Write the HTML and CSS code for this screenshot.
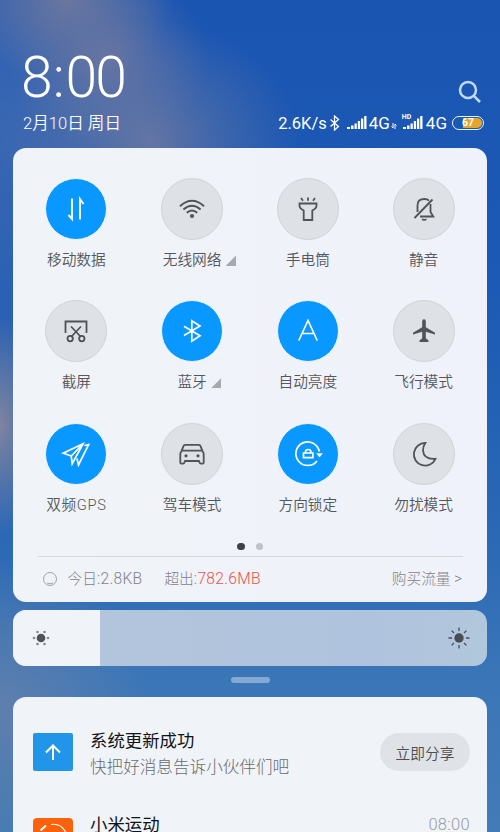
FILE: index.html
```html
<!DOCTYPE html>
<html lang="zh-CN">
<head>
<meta charset="utf-8">
<title>控制中心</title>
<link rel="stylesheet" href="styles.css">
</head>
<body>
<div class="screen">
  <header class="header">
    <div class="clock"><span>8</span><span class="colon">:</span><span>00</span></div>
    <svg class="search" viewBox="0 0 24 24"><circle cx="10" cy="10" r="8"/><path d="M15.8 15.8 22 22"/></svg>
    <div class="date">2月10日 周日</div>
    <div class="status">
      <span class="speed">2.6K/s</span>
      <svg class="s-bt" viewBox="0 0 10 16"><path d="M1 4.5 9 11.5 5 15V1l4 3.5-8 7"/></svg>
      <svg class="s-signal" viewBox="0 0 20 14"><path d="M0 11h3v2H0zM4 9.5h2.5V13H4zM7.500 7.500h2.300V13H7.500zM10.800 5h2.300v8h-2.300zM14 2.500h2.300V13H14zM17.200 0h2.300v13h-2.300z"/></svg>
      <span class="net">4G</span>
      <svg class="s-data" viewBox="0 0 6 6"><path d="M2 0v5L.5 3.500M4 6V1l1.500 1.500"/></svg>
      <span class="hd-signal"><svg class="s-signal" viewBox="0 0 20 14"><path d="M0 11h3v2H0zM4 9.500h2.500V13H4zM7.500 7.500h2.300V13H7.500zM10.800 5h2.300v8h-2.300zM14 2.500h2.300V13H14zM17.200 0h2.300v13h-2.300z"/></svg><small>HD</small></span>
      <span class="net">4G</span>
      <span class="battery"><b>67</b></span>
    </div>
  </header>

  <main class="panel">
    <div class="grid">
      <div class="tile on"><i><svg viewBox="0 0 30 30"><path stroke-width="1.900" d="M11 4.500V25L7.500 21M19 25.500V5l3.500 5"/></svg></i><p>移动数据</p></div>
      <div class="tile"><i><svg viewBox="0 0 30 30"><path stroke-width="1.900" d="M3 12.200Q15 1.500 27 12.200M6.400 15.500q8.600-7.400 17.200 0M9.700 18.800q5.300-4.500 10.600 0"/><circle class="fill" cx="15" cy="22" r="2.100"/></svg></i><p>无线网络<em></em></p></div>
      <div class="tile"><i><svg viewBox="0 0 30 30"><path d="M6.500 9.500h17v2.300q0 2.700-4.200 4.700v9.500h-8.600v-9.500q-4.200-2-4.200-4.700zM15 3.500v3.200M8 4l2 2.700M22 4l-2 2.700"/></svg></i><p>手电筒</p></div>
      <div class="tile"><i><svg viewBox="0 0 30 30"><path d="M8.500 18v-6.500q0-6.500 7-6.500 3 0 4.500 1.600M21.500 10v8l2.800 4.500H11M5.500 24 23.500 5.500M13 25.300q2 1.200 4.500 0"/></svg></i><p>静音</p></div>

      <div class="tile"><i><svg viewBox="0 0 30 30"><path d="M4.500 17V5.500h21V17M10 10.500 20 21M20 10.500 10 21"/><circle cx="9.200" cy="22.600" r="2.700"/><circle cx="20.800" cy="22.600" r="2.700"/></svg></i><p>截屏</p></div>
      <div class="tile on"><i><svg viewBox="0 0 30 30"><path stroke-width="1.700" d="m7 10.300 16 9.500-8.200 5.400V4.800L23 10 7 19.500"/></svg></i><p>蓝牙<em></em></p></div>
      <div class="tile on"><i><svg viewBox="0 0 30 30"><path stroke-width="1.700" d="M5.800 24.500 15 4.500l9.200 20M9.300 17.500h11.400"/></svg></i><p>自动亮度</p></div>
      <div class="tile"><i><svg viewBox="0 0 30 30"><path class="fill" d="M15 3.200q1.800 0 1.800 2v6.100l9.200 5.500v1.600l-9.200-2.600v6.500l2.700 2.300v1.300h-9v-1.300l2.700-2.300v-6.500L4 18.400v-1.600l9.200-5.500V5.200q0-2 1.800-2z"/></svg></i><p>飞行模式</p></div>

      <div class="tile on"><i><svg viewBox="0 0 30 30"><path stroke-width="1.700" d="M22 4.800 2.200 14.200l8 2.800 1 7.700zM22 4.800 10.300 17M23.300 6.500l4.300-.9L17.500 26l-1.500-6.500"/></svg></i><p>双频GPS</p></div>
      <div class="tile"><i><svg viewBox="0 0 30 30"><path d="M8 5.800h14q1 0 1.400 1l2.100 5.300q1.200 1.400 1.200 3.200v8.300q0 1-1 1h-1.800q-1 0-1.300-1l-.6-1.600H8l-.6 1.600q-.3 1-1.300 1H4.300q-1 0-1-1v-8.300q0-1.800 1.200-3.200l2.100-5.300q.4-1 1.400-1zM5 11.700h20"/><circle class="fill" cx="9" cy="16.800" r="1.600"/><circle class="fill" cx="21" cy="16.800" r="1.600"/></svg></i><p>驾车模式</p></div>
      <div class="tile on"><i><svg viewBox="0 0 30 30"><path stroke-width="1.700" d="M24 21.900A11.800 11.800 0 1 1 26.300 12.500M10.500 14h9.400v4.700h-9.400zM12.500 14v-1q0-2.500 2.700-2.500t2.700 2.500v1"/><path class="fill" d="M23.200 14.300h6.600l-3.300 4.200z"/></svg></i><p>方向锁定</p></div>
      <div class="tile"><i><svg viewBox="0 0 30 30"><path d="M16.300 4A11.300 11.300 0 1 0 26.500 19.800Q14.800 20.800 14 11.500 13.900 7.400 16.300 4z"/></svg></i><p>勿扰模式</p></div>
    </div>
    <div class="dots"><span></span><span></span></div>
    <div class="usage">
      <svg viewBox="0 0 16 16"><circle cx="8" cy="8" r="6.500"/><path d="M5 12q3 1.500 6 0"/></svg>
      <span class="today">今日<span class="num">:2.8KB</span></span>
      <span>超出<span class="num">:<b>782.6MB</b></span></span>
      <span class="buy">购买流量 <span class="num">&gt;</span></span>
    </div>
  </main>

  <div class="brightness">
    <div class="level"><svg viewBox="0 0 20 20"><circle cx="10" cy="10" r="4.300"/><g class="rays"><circle cx="3" cy="10" r="1.300"/><circle cx="17" cy="10" r="1.300"/><circle cx="6.500" cy="4" r="1.300"/><circle cx="13.500" cy="4" r="1.300"/><circle cx="6.500" cy="16" r="1.300"/><circle cx="13.500" cy="16" r="1.300"/></g></svg></div>
    <svg class="bright" viewBox="0 0 22 22"><circle cx="11" cy="11" r="4.700"/><path d="M11 .5V4M11 18v3.500M.5 11H4M18 11h3.500M3.600 3.600 6 6M16 16l2.400 2.400M3.600 18.400 6 16M16 6l2.400-2.400"/></svg>
  </div>
  <div class="handle"></div>

  <section class="notices">
    <article class="notice">
      <svg class="app" viewBox="0 0 40 38"><rect width="40" height="38" rx="2" fill="#2196e8"/><path d="M20 27V13M13 19.500l7-7 7 7"/></svg>
      <div class="copy"><h2>系统更新成功</h2><p>快把好消息告诉小伙伴们吧</p></div>
      <button>立即分享</button>
    </article>
    <article class="notice second">
      <svg class="app" viewBox="0 0 40 38"><rect width="40" height="38" rx="4" fill="#fb620b"/><path stroke-width="1.200" d="M18 6.500q9-1.500 14 6.500a13 13 0 0 1-24 9"/><path d="m7.500 12.500 5.500-5"/></svg>
      <h2>小米运动</h2>
      <time>08:00</time>
    </article>
  </section>
</div>
</body>
</html>
```

FILE: styles.css
```css
* { box-sizing: border-box; }
body, h2, p { margin: 0; }
body {
  font-family: Roboto, "Noto Sans CJK SC", sans-serif;
  font-weight: 300;
}
svg { fill: none; stroke: currentColor; flex: none; display: block; }
.screen {
  width: 500px;
  height: 832px;
  overflow: hidden;
  padding: 0 13px;
  background:
    radial-gradient(ellipse 150px 120px at 150px 140px, rgba(116,124,160,.8) 0, rgba(116,124,160,.4) 45%, rgba(116,124,160,0) 100%),
    radial-gradient(ellipse 110px 80px at 65px 0, rgba(124,125,154,.75) 0, rgba(124,125,154,.4) 45%, rgba(124,125,154,0) 100%),
    radial-gradient(ellipse 100px 90px at 108px 60px, rgba(116,122,158,.75) 0, rgba(116,122,158,.35) 50%, rgba(116,122,158,0) 100%),
    radial-gradient(ellipse 45px 110px at 0 425px, #80849f 0, rgba(128,132,159,0) 100%),
    radial-gradient(ellipse 150px 150px at 0 710px, rgba(98,128,172,.9) 0, rgba(98,128,172,0) 100%),
    radial-gradient(ellipse 180px 320px at 0 130px, rgba(70,110,178,.7) 0, rgba(70,110,178,0) 100%),
    linear-gradient(#1a55b2, #1c5ab5 35%, #2b69b5 65%, #3b76b8 82%, #437bb6);
}
.header {
  height: 148px;
  padding: 50px 3px 0 10px;
  display: grid;
  grid-template-columns: 110px 1fr;
  grid-template-rows: 60px 25px;
  color: #fff;
}
.clock {
  font-size: 57px;
  line-height: 55px;
  font-weight: 300;
  letter-spacing: -2px;
  white-space: nowrap;
  margin-left: -2px;
}
.colon { margin: 0 3px 0 2px; }
.search {
  width: 24px;
  height: 24px;
  margin: 30px 2px 0 0;
  justify-self: end;
  color: #c1dbf9;
  stroke-width: 2.500;
}
.date { font-size: 16.600px; line-height: 27px; white-space: nowrap; font-weight: 350; }
.status { display: flex; align-items: center; justify-content: flex-end; height: 26px; font-size: 17px; font-weight: 400; white-space: nowrap; }
.speed { margin-right: 2px; font-size: 16.500px; }
.s-bt { width: 11px; height: 16px; margin-right: 7px; stroke-width: 1.300; }
.s-signal { width: 20px; height: 14px; fill: currentColor; stroke: none; }
.net { margin-left: 2px; }
.s-data { width: 6px; height: 6px; margin: 5px 6px 0 1px; }
.hd-signal { position: relative; }
.hd-signal small { position: absolute; left: -1px; top: -3px; font-size: 7px; line-height: 8px; font-weight: 700; }
.hd-signal + .net { margin-left: 3px; }
.battery {
  width: 32px;
  height: 14px;
  margin-left: 5px;
  border: 1.500px solid #eef6ff;
  border-radius: 8px;
  padding: 1px;
  display: flex;
}
.battery b {
  flex: 1;
  border-radius: 5px;
  text-align: center;
  font-size: 10.500px;
  line-height: 10px;
  background: linear-gradient(90deg, transparent 32%, #e6a52d 32%);
}
.panel {
  height: 454px;
  border-radius: 13px;
  padding: 30px 5.500px 0;
  background: linear-gradient(90deg, #f0f4f8, #eff2fa);
  color: #54575b;
}
.grid { display: grid; grid-template-columns: repeat(4, 1fr); grid-auto-rows: 122.400px; }
.tile { display: flex; flex-direction: column; align-items: center; }
.tile i {
  width: 62px;
  height: 62px;
  border-radius: 50%;
  border: 1px solid #d0d4d9;
  background: #dee1e5;
  display: grid;
  place-items: center;
  color: #505358;
}
.tile.on i { background: #0898ff; border-color: #f0f4f8; color: #fff; }
.tile svg { width: 30px; height: 30px; stroke-width: 1.800; }
.tile .fill { fill: currentColor; stroke: none; }
.tile p { position: relative; margin-top: 10px; font-size: 14.700px; line-height: 20px; font-weight: 350; white-space: nowrap; }
.tile:nth-child(9) p { letter-spacing: .6px; }
.tile em {
  position: absolute;
  left: calc(100% + 4px);
  bottom: 4px;
  width: 10.500px;
  height: 10.500px;
  background: #a6a9ad;
  clip-path: polygon(100% 0, 100% 100%, 0 100%);
}
.dots { display: flex; justify-content: center; gap: 11px; margin-top: -2.500px; height: 10px; }
.dots span { width: 7.500px; height: 7.500px; border-radius: 50%; background: #3e4145; }
.dots span + span { background: #bfc2c6; }
.usage {
  margin: 3px 19px 0;
  border-top: 1px solid #d5d9dd;
  height: 46px;
  padding-left: 4px;
  display: flex;
  align-items: center;
  font-size: 14.700px;
  line-height: 20px;
  color: #7f8286;
}
.usage svg { width: 16px; height: 16px; margin-right: 10px; stroke-width: .7; }
.num { font-size: 15.600px; letter-spacing: .3px; }
.today { margin-right: 22px; }
.usage b { font-weight: 350; color: #ec5148; }
.buy { margin-left: auto; }
.brightness {
  margin-top: 8px;
  height: 56px;
  border-radius: 13px;
  overflow: hidden;
  background: linear-gradient(90deg, #b4c6db, #b0c3de 75%, #b1c7db);
  display: flex;
  align-items: center;
  color: #484d55;
}
.level { width: 87px; height: 56px; background: #f0f4f8; display: flex; align-items: center; padding-left: 18px; }
.level svg { width: 20px; height: 20px; fill: #505256; stroke: none; }
.rays { fill: #85888c; }
.bright { width: 22px; height: 22px; margin: 0 17px 0 auto; stroke-width: 1.300; }
.bright circle { fill: currentColor; stroke: none; }
.handle { width: 39px; height: 6px; margin: 11px auto 14px; border-radius: 3px; background: #84a9d3; }
.notices { height: 160px; border-radius: 13px; background: #f0f4f9; padding: 36px 17px 0 20px; }
.notice { display: flex; align-items: center; height: 38px; }
.app { width: 40px; height: 38px; margin-right: 17px; stroke: #fff; stroke-width: 2; }
.app rect { stroke: none; }
.copy { padding-top: 4px; }
h2 { font-size: 17.400px; line-height: 26px; font-weight: 400; color: #121315; white-space: nowrap; }
.copy p { font-size: 16.600px; line-height: 27px; color: #686b6f; white-space: nowrap; }
button {
  width: 90px;
  height: 38px;
  margin-left: auto;
  padding: 0;
  border: 0;
  border-radius: 19px;
  background: #dfe2e6;
  color: #4b4e52;
  font: 350 14.700px Roboto, "Noto Sans CJK SC", sans-serif;
}
.second { margin-top: 47px; align-items: flex-start; }
.second h2 { margin-top: -6px; }
time { margin: -6px 0 0 auto; font-size: 16.500px; line-height: 26px; letter-spacing: .3px; color: #989ba0; }
```
